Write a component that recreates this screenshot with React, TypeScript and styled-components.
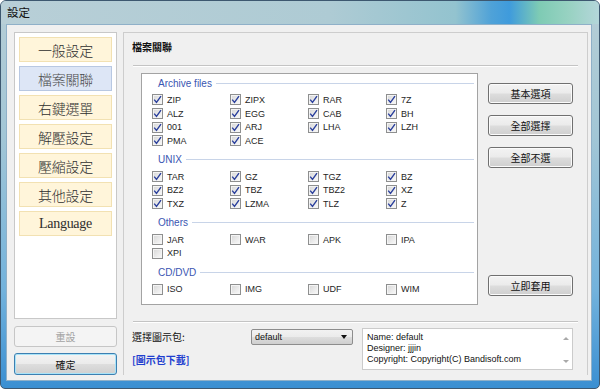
import React from 'react';
import styled, { createGlobalStyle } from 'styled-components';

const Global = createGlobalStyle`
  html, body { margin: 0; padding: 0; background: #fff; }
  body { width: 600px; height: 389px; overflow: hidden; font-family: "Liberation Sans", "Noto Sans CJK TC", sans-serif; }
  * { box-sizing: border-box; }
`;

const Frame = styled.div`
  width: 600px;
  height: 389px;
  display: flex;
  flex-direction: column;
  border: 1px solid #3d5870;
  border-radius: 6px 6px 5px 5px;
  background: linear-gradient(180deg, #b6ced6 0%, #a2c6d6 35%, #72b2dc 75%, #3a8fd2 100%);
  overflow: hidden;
`;

const TitleBar = styled.div`
  height: 23px;
  flex: none;
  display: flex;
  align-items: center;
  padding: 0 0 2px 6px;
  font-family: "Noto Sans CJK TC", sans-serif;
  font-size: 11.5px;
  color: #111;
  background: linear-gradient(90deg, #b8cfd7 0%, #aecbd4 55%, #93c3cf 76%, #4fa2d8 82%, #3f9bdc 85%, #7ecbb4 90%, #98d2c2 95%, #b4d6da 100%);
`;

const Client = styled.div`
  flex: 1;
  margin: 0 7px 7px 5px;
  display: flex;
  gap: 6px;
  padding: 7px 3px 5px 7px;
  background: #f0f0f0;
  border: 1px solid #8fb0c8;
`;

const LeftCol = styled.div`
  width: 103px;
  flex: none;
  display: flex;
  flex-direction: column;
`;

const SideList = styled.div`
  height: 287px;
  background: #fff;
  border: 1px solid #c8c8c8;
  padding: 4px;
  display: flex;
  flex-direction: column;
  gap: 4px;
`;

const SideItem = styled.div<{ $active?: boolean }>`
  height: 25px;
  display: flex;
  align-items: center;
  justify-content: center;
  font-family: "Liberation Serif", "Noto Sans CJK TC", serif;
  font-size: 14px;
  font-weight: 300;
  letter-spacing: -0.3px;
  color: ${p => (p.$active ? '#4a4a4a' : '#2e2e2e')};
  background: ${p => (p.$active ? '#dde6f6' : '#fff5da')};
  border: 1px solid ${p => (p.$active ? '#b8c8e2' : '#f2e1b2')};
`;

const WinButton = styled.div<{ $disabled?: boolean; $focused?: boolean; $h?: number }>`
  height: ${p => p.$h ?? 21}px;
  display: flex;
  align-items: center;
  justify-content: center;
  font-family: "Noto Sans CJK TC", sans-serif;
  font-size: 10px;
  color: ${p => (p.$disabled ? '#a3a3a3' : '#111')};
  border-radius: 3px;
  border: 1px solid ${p => (p.$disabled ? '#c6c6c6' : p.$focused ? '#3c7fb1' : '#707070')};
  background: ${p =>
    p.$disabled
      ? '#f4f4f4'
      : 'linear-gradient(180deg, #f3f3f3 0%, #ebebeb 48%, #dddddd 52%, #cfcfcf 100%)'};
  box-shadow: ${p => (p.$focused ? 'inset 0 0 0 1px #a8e3f8' : p.$disabled ? 'none' : 'inset 0 0 0 1px #fbfbfb')};
`;

const ResetButton = styled(WinButton)`
  margin-top: 7px;
`;

const OkButton = styled(WinButton)`
  margin-top: 6px;
`;

const RightPanel = styled.div`
  flex: 1;
  display: flex;
  flex-direction: column;
  border: 1px solid #cdcdcd;
  border-bottom: none;
  padding: 7px 9px 0 8px;
`;

const PanelTitle = styled.div`
  height: 14px;
  line-height: 14px;
  font-family: "Noto Sans CJK TC", sans-serif;
  font-size: 10px;
  font-weight: 700;
  color: #111;
`;

const Separator = styled.div<{ $mt: number }>`
  margin-top: ${p => p.$mt}px;
  margin-left: 1px;
  border-top: 1px solid #c4c4c4;
  border-bottom: 1px solid #fff;
`;

const ContentRow = styled.div`
  display: flex;
  margin-top: 6px;
  padding: 0 5px 0 9px;
`;

const ListBox = styled.div`
  width: 337px;
  height: 232px;
  background: #fff;
  border: 1px solid #a3a3a3;
  padding: 2px 2px 0 10px;
`;

const Group = styled.div`
  margin-bottom: 5px;
`;

const GroupHeader = styled.div`
  height: 14px;
  display: flex;
  align-items: center;
  margin-left: 6px;
  margin-right: 1px;
  margin-bottom: 3px;
  font-size: 10px;
  color: #3a56b2;
`;

const HeaderLine = styled.div`
  flex: 1;
  height: 1px;
  margin-left: 4px;
  background: #c8d4e8;
`;

const Grid = styled.div`
  display: grid;
  grid-template-columns: repeat(4, 78px);
  grid-auto-rows: 13.7px;
`;

const Item = styled.div`
  display: flex;
  align-items: center;
  gap: 4px;
  font-size: 9px;
  color: #1e1e1e;
`;

const Box = styled.span`
  width: 11px;
  height: 11px;
  flex: none;
  display: flex;
  align-items: center;
  justify-content: center;
  border: 1px solid #8e8f8f;
  background: linear-gradient(135deg, #d6d6d6 0%, #ececec 60%, #fafafa 100%);
  box-shadow: inset 0 0 0 1px #f4f4f4;
`;

const ButtonCol = styled.div`
  width: 85px;
  margin-left: auto;
  display: flex;
  flex-direction: column;
  gap: 11px;
  padding: 10px 0 9px;
`;

const ApplyButton = styled(WinButton)`
  margin-top: auto;
`;

const BottomRow = styled.div`
  display: flex;
  align-items: flex-start;
  margin-top: 5px;
`;

const BottomLeft = styled.div`
  width: 119px;
  flex: none;
  padding-top: 2px;
  display: flex;
  flex-direction: column;
`;

const Label = styled.div`
  height: 14px;
  line-height: 14px;
  font-family: "Noto Sans CJK TC", sans-serif;
  font-size: 10px;
  color: #111;
`;

const Link = styled.div`
  margin-top: 9px;
  height: 14px;
  line-height: 14px;
  font-family: "Noto Sans CJK TC", sans-serif;
  font-size: 10px;
  font-weight: 700;
  color: #1f3fcf;
`;

const Select = styled.div`
  margin-top: 1px;
  width: 102px;
  height: 16px;
  flex: none;
  display: flex;
  align-items: center;
  padding: 0 5px 0 3px;
  font-size: 9px;
  color: #111;
  border: 1px solid #8d8d8d;
  border-radius: 2px;
  background: linear-gradient(180deg, #f2f2f2 0%, #ebebeb 48%, #dddddd 52%, #cfcfcf 100%);
`;

const SelectText = styled.span`
  flex: 1;
`;

const Caret = styled.span`
  width: 0;
  height: 0;
  border-left: 3.5px solid transparent;
  border-right: 3.5px solid transparent;
  border-top: 4px solid #111;
`;

const InfoBox = styled.div`
  margin-left: 9px;
  width: 211px;
  height: 42px;
  display: flex;
  border: 1px solid #cbcbcb;
  background: #fff;
`;

const InfoText = styled.div`
  flex: 1;
  padding: 3px 4px;
  font-size: 9px;
  line-height: 10.8px;
  color: #111;
  white-space: nowrap;
`;

const ScrollCol = styled.div`
  width: 12px;
  display: flex;
  flex-direction: column;
  justify-content: space-between;
  align-items: center;
  padding: 8px 0 6px;
`;

const Tri = styled.span<{ $up?: boolean }>`
  width: 0;
  height: 0;
  border-left: 3px solid transparent;
  border-right: 3px solid transparent;
  ${p => (p.$up ? 'border-bottom: 3px solid #a9a9a9;' : 'border-top: 3px solid #a9a9a9;')}
`;

const Check = () => (
  <svg width="9" height="9" viewBox="0 0 9 9">
    <path d="M1.2 4.6 L3.5 7.4 L8 1.2" fill="none" stroke="#2a3f9c" strokeWidth="1.4" />
  </svg>
);

type G = { name: string; items: string[]; checked: boolean };

const groups: G[] = [
  { name: 'Archive files', checked: true, items: ['ZIP', 'ZIPX', 'RAR', '7Z', 'ALZ', 'EGG', 'CAB', 'BH', '001', 'ARJ', 'LHA', 'LZH', 'PMA', 'ACE'] },
  { name: 'UNIX', checked: true, items: ['TAR', 'GZ', 'TGZ', 'BZ', 'BZ2', 'TBZ', 'TBZ2', 'XZ', 'TXZ', 'LZMA', 'TLZ', 'Z'] },
  { name: 'Others', checked: false, items: ['JAR', 'WAR', 'APK', 'IPA', 'XPI'] },
  { name: 'CD/DVD', checked: false, items: ['ISO', 'IMG', 'UDF', 'WIM'] },
];

const sideItems = ['一般設定', '檔案關聯', '右鍵選單', '解壓設定', '壓縮設定', '其他設定', 'Language'];

export default function App() {
  return (
    <>
      <Global />
      <Frame>
        <TitleBar>設定</TitleBar>
        <Client>
          <LeftCol>
            <SideList>
              {sideItems.map((s, i) => (
                <SideItem key={s} $active={i === 1}>
                  {s}
                </SideItem>
              ))}
            </SideList>
            <ResetButton $disabled>重設</ResetButton>
            <OkButton $focused $h={22}>確定</OkButton>
          </LeftCol>
          <RightPanel>
            <PanelTitle>檔案關聯</PanelTitle>
            <Separator $mt={11} />
            <ContentRow>
              <ListBox>
                {groups.map(g => (
                  <Group key={g.name}>
                    <GroupHeader>
                      {g.name}
                      <HeaderLine />
                    </GroupHeader>
                    <Grid>
                      {g.items.map(it => (
                        <Item key={it}>
                          <Box>{g.checked && <Check />}</Box>
                          {it}
                        </Item>
                      ))}
                    </Grid>
                  </Group>
                ))}
              </ListBox>
              <ButtonCol>
                <WinButton>基本選項</WinButton>
                <WinButton>全部選擇</WinButton>
                <WinButton>全部不選</WinButton>
                <ApplyButton>立即套用</ApplyButton>
              </ButtonCol>
            </ContentRow>
            <Separator $mt={16} />
            <BottomRow>
              <BottomLeft>
                <Label>選擇圖示包:</Label>
                <Link>[圖示包下載]</Link>
              </BottomLeft>
              <Select>
                <SelectText>default</SelectText>
                <Caret />
              </Select>
              <InfoBox>
                <InfoText>
                  Name: default
                  <br />
                  Designer: jjjin
                  <br />
                  Copyright: Copyright(C) Bandisoft.com
                </InfoText>
                <ScrollCol>
                  <Tri $up />
                  <Tri />
                </ScrollCol>
              </InfoBox>
            </BottomRow>
          </RightPanel>
        </Client>
      </Frame>
    </>
  );
}
